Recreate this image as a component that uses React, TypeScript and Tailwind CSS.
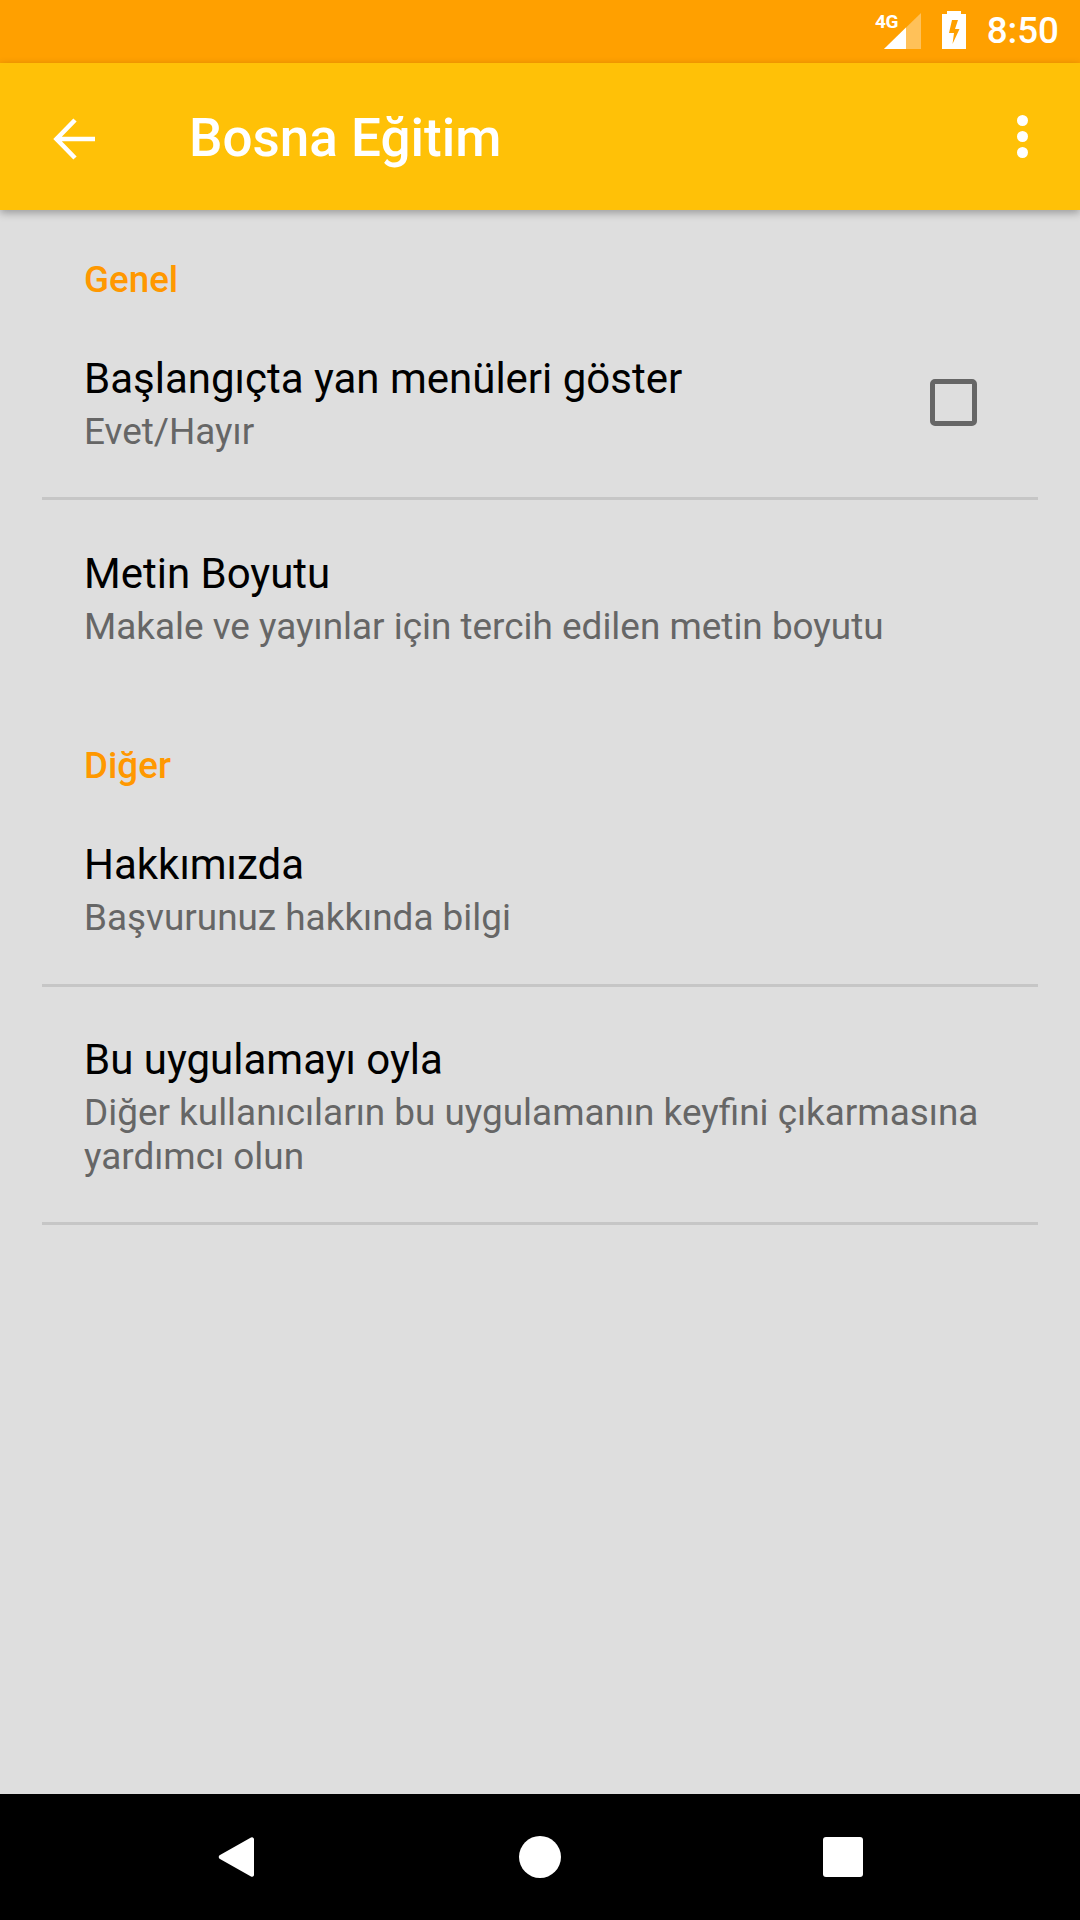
import React from 'react';

const Divider: React.FC = () => <div className="mx-[42px] h-[3px] bg-[#c6c6c6]" />;

const Category: React.FC<{ label: string; className: string }> = ({ label, className }) => (
  <div className={`pl-[84px] text-[36.75px] leading-[44px] font-medium text-[#ff9800] ${className}`}>{label}</div>
);

const Row: React.FC<{ title: string; summary: string; className: string; children?: React.ReactNode }> = ({
  title,
  summary,
  className,
  children,
}) => (
  <div className={`flex items-center pl-[84px] pr-[42px] ${className}`}>
    <div className="flex-1">
      <div className="text-[42px] leading-[54px] text-black">{title}</div>
      <div className="mt-[4px] text-[36.9px] leading-[44px] text-[#666666]">{summary}</div>
    </div>
    {children}
  </div>
);

const App: React.FC = () => {
  return (
    <div className="flex h-[1920px] w-[1080px] flex-col bg-[#dedede] font-['Roboto',sans-serif]">
      {/* Status bar */}
      <div className="flex h-[63px] items-center justify-end bg-[#ffa000] pr-[21px]">
        <svg width="55" height="41" viewBox="0 0 55 41" className="mr-[18px]">
          <polygon points="15,38 52,2 52,38" fill="#ffffff" fillOpacity="0.35" />
          <polygon points="15,38 37,16.6 37,38" fill="#ffffff" />
          <text x="6" y="17" fontSize="19" fontWeight="700" letterSpacing="-0.5" fill="#ffffff" fontFamily="Roboto">
            4G
          </text>
        </svg>
        <svg width="24" height="38" viewBox="0 0 24 38" className="mr-[21px] mb-[3px]">
          <path d="M5 0h14v3h5v35H0V3h5z" fill="#ffffff" />
          <path d="M10 9h6l-3 9h4.5L10.5 33l1.5-11H7z" fill="#ffa000" />
        </svg>
        <span className="text-[36.75px] leading-none font-medium text-white">8:50</span>
      </div>

      {/* Toolbar */}
      <div className="relative z-10 flex h-[147px] items-center bg-[#ffc107] shadow-[0_3px_8px_rgba(0,0,0,0.3)]">
        <svg width="42" height="42" viewBox="0 0 42 42" className="mt-[5px] ml-[53px]">
          <path d="M42 21H4M22 2 3.5 21 22 40" fill="none" stroke="#ffffff" strokeWidth="4.6" />
        </svg>
        <h1 className="mt-[4px] ml-[94px] flex-1 text-[53px] leading-none font-medium text-white">Bosna Eğitim</h1>
        <div className="mr-[52px] flex flex-col gap-[5px]">
          <span className="size-[11px] rounded-full bg-white" />
          <span className="size-[11px] rounded-full bg-white" />
          <span className="size-[11px] rounded-full bg-white" />
        </div>
      </div>

      {/* Preferences */}
      <div className="flex-1">
        <Category label="Genel" className="pt-[48px]" />
        <Row title="Başlangıçta yan menüleri göster" summary="Evet/Hayır" className="pt-[50px] pb-[43px]">
          <div className="mr-[61px] mb-[2px] size-[47px] rounded-[5px] border-[5px] border-[#666666]" />
        </Row>
        <Divider />
        <Row title="Metin Boyutu" summary="Makale ve yayınlar için tercih edilen metin boyutu" className="pt-[47px] pb-[41px]" />
        <Category label="Diğer" className="pt-[54px]" />
        <Row title="Hakkımızda" summary="Başvurunuz hakkında bilgi" className="pt-[50px] pb-[44px]" />
        <Divider />
        <Row
          title="Bu uygulamayı oyla"
          summary="Diğer kullanıcıların bu uygulamanın keyfini çıkarmasına yardımcı olun"
          className="pt-[46px] pb-[43px]"
        />
        <Divider />
      </div>

      {/* Navigation bar */}
      <div className="flex h-[126px] items-center bg-black pl-[218px]">
        <svg width="36" height="42" viewBox="0 0 36 42">
          <path d="M33 1.5 2 19a2.2 2.2 0 0 0 0 4l31 17.5a2 2 0 0 0 3-1.5V3a2 2 0 0 0-3-1.5z" fill="#ffffff" />
        </svg>
        <div className="ml-[265px] size-[42px] rounded-full bg-white" />
        <div className="ml-[262px] size-[40px] rounded-[3px] bg-white" />
      </div>
    </div>
  );
};

export default App;
